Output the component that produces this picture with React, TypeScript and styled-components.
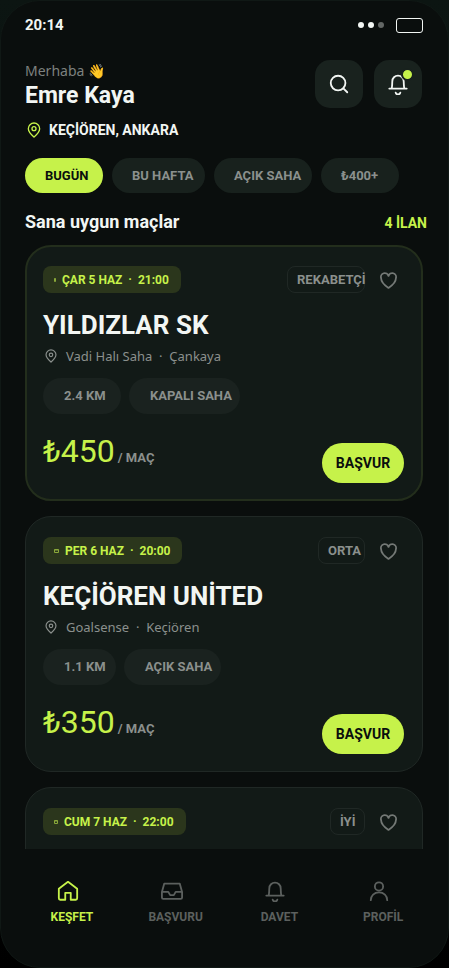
import React from "react";
import styled, { createGlobalStyle } from "styled-components";

const display = `Roboto, "Liberation Sans", Arial, sans-serif`;
const body = `"Noto Sans", "Open Sans", sans-serif`;
const lime = "#c6f24a";
const white = "#f2f6f3";
const grey = "#8b908d";

const GlobalStyle = createGlobalStyle`
  * { box-sizing: border-box; }
  html, body, #root { height: 100%; }
  body { margin: 0; background: linear-gradient(#0c1512, #000); color: ${white}; font-family: ${display}; }
  button { font: inherit; color: inherit; border: 0; padding: 0; background: none; cursor: pointer; }
  h1, h2, h3, p { margin: 0; }
`;

const Screen = styled.div`
  height: 100vh;
  display: flex;
  flex-direction: column;
  overflow: hidden;
  background: #0a0e0d;
  border: 1px solid #101815;
  border-radius: 40px;
`;

const StatusBar = styled.div`
  display: flex;
  align-items: center;
  justify-content: space-between;
  height: 48px;
  flex: none;
  padding: 0 25px 0 24px;
  font-size: 15px;
  font-weight: 700;
`;

const StatusIcons = styled.div`
  display: flex;
  align-items: center;
  gap: 4px;
`;

const Dot = styled.span<{ $dim?: boolean }>`
  width: 6px;
  height: 6px;
  border-radius: 50%;
  background: ${(p) => (p.$dim ? "#636765" : white)};
`;

const Battery = styled.span`
  width: 27px;
  height: 15px;
  margin-left: 8px;
  border: 1px solid ${white};
  border-radius: 3px;
`;

const Header = styled.header`
  display: flex;
  flex: none;
  justify-content: space-between;
  padding: 11px 26px 0 24px;
`;

const Greeting = styled.p`
  font: 14px/22px ${body};
  color: #7d817f;
`;

const UserName = styled.h1`
  font-size: 23px;
  line-height: 28px;
  font-weight: 700;
`;

const Place = styled.p`
  display: flex;
  align-items: center;
  gap: 7px;
  margin-top: 11px;
  padding-left: 1px;
  font-size: 14px;
  line-height: 18px;
  font-weight: 700;
`;

const HeaderActions = styled.div`
  display: flex;
  gap: 11px;
`;

const IconButton = styled.button`
  position: relative;
  display: grid;
  place-items: center;
  width: 48px;
  height: 48px;
  border-radius: 15px;
  background: #19221e;
`;

const NoticeDot = styled.span`
  position: absolute;
  top: 8px;
  right: 8px;
  box-sizing: content-box;
  width: 9px;
  height: 9px;
  border: 2px solid #19221e;
  border-radius: 50%;
  background: ${lime};
`;

const Filters = styled.div`
  display: flex;
  flex: none;
  gap: 9px;
  margin-top: 19px;
  padding: 0 24px;
`;

const Filter = styled.button<{ $width: number; $active?: boolean }>`
  width: ${(p) => p.$width}px;
  height: 35px;
  padding-left: 20px;
  border-radius: 18px;
  background: ${(p) => (p.$active ? lime : "#18211d")};
  color: ${(p) => (p.$active ? "#0a0e0d" : grey)};
  font-size: 13px;
  font-weight: 700;
  text-align: left;
  white-space: nowrap;
`;

const ListHead = styled.div`
  display: flex;
  flex: none;
  align-items: center;
  justify-content: space-between;
  height: 52px;
  padding: 4px 21px 0 24px;
`;

const ListTitle = styled.h2`
  font-size: 18px;
  font-weight: 700;
`;

const Count = styled.span`
  padding-top: 3px;
  color: ${lime};
  font-size: 14px;
  font-weight: 700;
`;

const List = styled.main`
  display: flex;
  flex: 1;
  min-height: 0;
  flex-direction: column;
  gap: 15px;
  overflow: hidden;
  padding: 0 25px 0 24px;
`;

const Card = styled.article<{ $featured?: boolean }>`
  flex: none;
  height: 256px;
  padding: ${(p) => (p.$featured ? "19px 17px 16px 16px" : "20px 18px 17px 17px")};
  border: ${(p) => (p.$featured ? "2px solid #232e1c" : "1px solid #202825")};
  border-radius: 26px;
  background: #121a17;
`;

const CardTop = styled.div`
  display: flex;
  align-items: center;
  height: 27px;
`;

const DateBadge = styled.span`
  display: flex;
  align-items: center;
  gap: 6px;
  height: 27px;
  margin-right: auto;
  padding: 0 12px 0 11px;
  border-radius: 8px;
  background: #2b361c;
  color: ${lime};
  font-size: 12px;
  font-weight: 700;
  white-space: pre;
`;

const Level = styled.span<{ $width: number }>`
  width: ${(p) => p.$width}px;
  height: 27px;
  padding-left: 9px;
  border: 1px solid #202825;
  border-radius: 8px;
  color: ${grey};
  font-size: 13px;
  line-height: 25px;
  font-weight: 700;
  white-space: nowrap;
`;

const Favourite = styled.button`
  display: grid;
  place-items: center;
  width: 17px;
  height: 27px;
  margin: 2px 7px 0 15px;
  color: #747976;
`;

const Team = styled.h3`
  margin-top: 14px;
  font-size: 26px;
  line-height: 36px;
  font-weight: 700;
`;

const Venue = styled.p`
  display: flex;
  align-items: center;
  gap: 8px;
  height: 26px;
  padding-left: 1px;
  color: ${grey};
  font: 13px/26px ${body};
  white-space: pre;
`;

const Tags = styled.div`
  display: flex;
  gap: 8px;
  margin-top: 9px;
`;

const Tag = styled.span<{ $width: number }>`
  width: ${(p) => p.$width}px;
  height: 36px;
  padding-left: 21px;
  border-radius: 18px;
  background: #1a221f;
  color: ${grey};
  font-size: 13px;
  line-height: 36px;
  font-weight: 700;
  white-space: nowrap;
`;

const CardBottom = styled.div`
  display: flex;
  align-items: flex-end;
  justify-content: space-between;
  margin-top: 15px;
  height: 54px;
`;

const Price = styled.p`
  align-self: flex-start;
  color: ${lime};
  font-size: 32px;
  line-height: 44px;
`;

const Unit = styled.span`
  margin-left: 3px;
  color: ${grey};
  font-size: 13px;
  font-weight: 700;
`;

const Apply = styled.button`
  width: 82px;
  height: 40px;
  border-radius: 20px;
  background: ${lime};
  color: #0a0e0d;
  font-size: 14px;
  font-weight: 700;
`;

const TabBar = styled.nav`
  display: grid;
  flex: none;
  grid-template-columns: repeat(4, 1fr);
  height: 118px;
  padding: 31px 13px 0 19px;
`;

const Tab = styled.button<{ $active?: boolean }>`
  display: flex;
  flex-direction: column;
  align-items: center;
  gap: 6px;
  color: ${(p) => (p.$active ? lime : "#5c605e")};
  font-size: 12px;
  line-height: 18px;
  font-weight: 700;
`;

const TabIcon = styled.span`
  display: flex;
  padding-right: 8px;
`;

type IconProps = { size: number; color?: string };
const Svg = ({ size, color = "currentColor", children }: IconProps & { children: React.ReactNode }) => (
  <svg width={size} height={size} viewBox="0 0 24 24" fill="none" stroke={color} strokeWidth="2" strokeLinecap="round" strokeLinejoin="round" aria-hidden="true">
    {children}
  </svg>
);
const Pin = (p: IconProps) => (
  <Svg {...p}><path d="M12 22.500c4.500-4 8.500-7.500 8.500-12.500a8.500 8.500 0 0 0-17 0c0 5 4 8.500 8.500 12.500z" /><circle cx="12" cy="10" r="3" /></Svg>
);
const SearchIcon = (p: IconProps) => (
  <Svg {...p}><circle cx="11" cy="11" r="8" /><path d="m17 17 4 4" /></Svg>
);
const Bell = (p: IconProps) => (
  <Svg {...p}><path d="M2.500 17h19M5 17c.8-2 .5-4 .8-8a6.200 6.200 0 0 1 12.400 0c.3 4 0 6 .8 8M9.500 21.500a2.600 2.600 0 0 0 5 0" /></Svg>
);
const Heart = (p: IconProps) => (
  <Svg {...p}><path strokeWidth="2.500" d="M12 22.500C7.500 19.500 1.500 14.500 1.500 8.500A5.400 5.400 0 0 1 12 5.500a5.400 5.400 0 0 1 10.500 3C22.500 14.500 16.500 19.500 12 22.500z" /></Svg>
);
const Home = (p: IconProps) => (
  <Svg {...p}><path d="M2 9.500 12 2l10 7.500V20a1.500 1.500 0 0 1-1.500 1.500H15V14H9v7.500H3.500A1.500 1.500 0 0 1 2 20z" /></Svg>
);
const Inbox = (p: IconProps) => (
  <Svg {...p}><path d="M1 13 3.500 4h17L23 13v6a1.500 1.500 0 0 1-1.500 1.500h-19A1.500 1.500 0 0 1 1 19zM1.500 13H8l2 3.500h4l2-3.500h6.500" /></Svg>
);
const Person = (p: IconProps) => (
  <Svg {...p}><circle cx="12" cy="7" r="4.500" /><path d="M3 22c0-5 3.800-8.500 9-8.500s9 3.500 9 8.500" /></Svg>
);
const Calendar = ({ size }: IconProps) => (
  <svg width={size} height="6" viewBox={`0 0 ${size} 6`} fill="none" stroke="#8aa83a" aria-hidden="true">
    <path d={`M.5 1.500h${size - 1}v3h-${size - 1}zM.5 2h${size - 1}`} />
  </svg>
);

const filters = [
  { label: "BUGÜN", width: 78 },
  { label: "BU HAFTA", width: 93 },
  { label: "AÇIK SAHA", width: 98 },
  { label: "₺400+", width: 78 },
];

const matches = [
  { date: "ÇAR 5 HAZ  ·  21:00", icon: 2, level: "REKABETÇİ", levelWidth: 78, team: "YILDIZLAR SK", venue: "Vadi Halı Saha  ·  Çankaya", tags: [["2.4 KM", 78], ["KAPALI SAHA", 111]] as [string, number][], price: "450" },
  { date: "PER 6 HAZ  ·  20:00", icon: 5, level: "ORTA", levelWidth: 47, team: "KEÇİÖREN UNİTED", venue: "Goalsense  ·  Keçiören", tags: [["1.1 KM", 73], ["AÇIK SAHA", 97]] as [string, number][], price: "350" },
  { date: "CUM 7 HAZ  ·  22:00", icon: 4, level: "İYİ", levelWidth: 35, team: "", venue: "", tags: [] as [string, number][], price: "" },
];

const tabs = [
  { label: "KEŞFET", Icon: Home },
  { label: "BAŞVURU", Icon: Inbox },
  { label: "DAVET", Icon: Bell },
  { label: "PROFİL", Icon: Person },
];

export default function App() {
  return (
    <>
      <GlobalStyle />
      <Screen>
        <StatusBar>
          <span>20:14</span>
          <StatusIcons><Dot /><Dot /><Dot $dim /><Battery /></StatusIcons>
        </StatusBar>
        <Header>
          <div>
            <Greeting>Merhaba 👋</Greeting>
            <UserName>Emre Kaya</UserName>
            <Place><Pin size={16} color={lime} />KEÇİÖREN, ANKARA</Place>
          </div>
          <HeaderActions>
            <IconButton aria-label="Ara"><SearchIcon size={22} /></IconButton>
            <IconButton aria-label="Bildirimler"><Bell size={22} /><NoticeDot /></IconButton>
          </HeaderActions>
        </Header>
        <Filters>
          {filters.map((f, i) => <Filter key={f.label} $width={f.width} $active={i === 0}>{f.label}</Filter>)}
        </Filters>
        <ListHead><ListTitle>Sana uygun maçlar</ListTitle><Count>4 İLAN</Count></ListHead>
        <List>
          {matches.map((m, i) => (
            <Card key={m.date} $featured={i === 0}>
              <CardTop>
                <DateBadge><Calendar size={m.icon} />{m.date}</DateBadge>
                <Level $width={m.levelWidth}>{m.level}</Level>
                <Favourite aria-label="Favorilere ekle"><Heart size={17} /></Favourite>
              </CardTop>
              {m.team && (
                <>
                  <Team>{m.team}</Team>
                  <Venue><Pin size={14} />{m.venue}</Venue>
                  <Tags>{m.tags.map(([label, width]) => <Tag key={label} $width={width}>{label}</Tag>)}</Tags>
                  <CardBottom>
                    <Price>₺{m.price}<Unit>/ MAÇ</Unit></Price>
                    <Apply>BAŞVUR</Apply>
                  </CardBottom>
                </>
              )}
            </Card>
          ))}
        </List>
        <TabBar>
          {tabs.map(({ label, Icon }, i) => <Tab key={label} $active={i === 0}><TabIcon><Icon size={22} /></TabIcon>{label}</Tab>)}
        </TabBar>
      </Screen>
    </>
  );
}
